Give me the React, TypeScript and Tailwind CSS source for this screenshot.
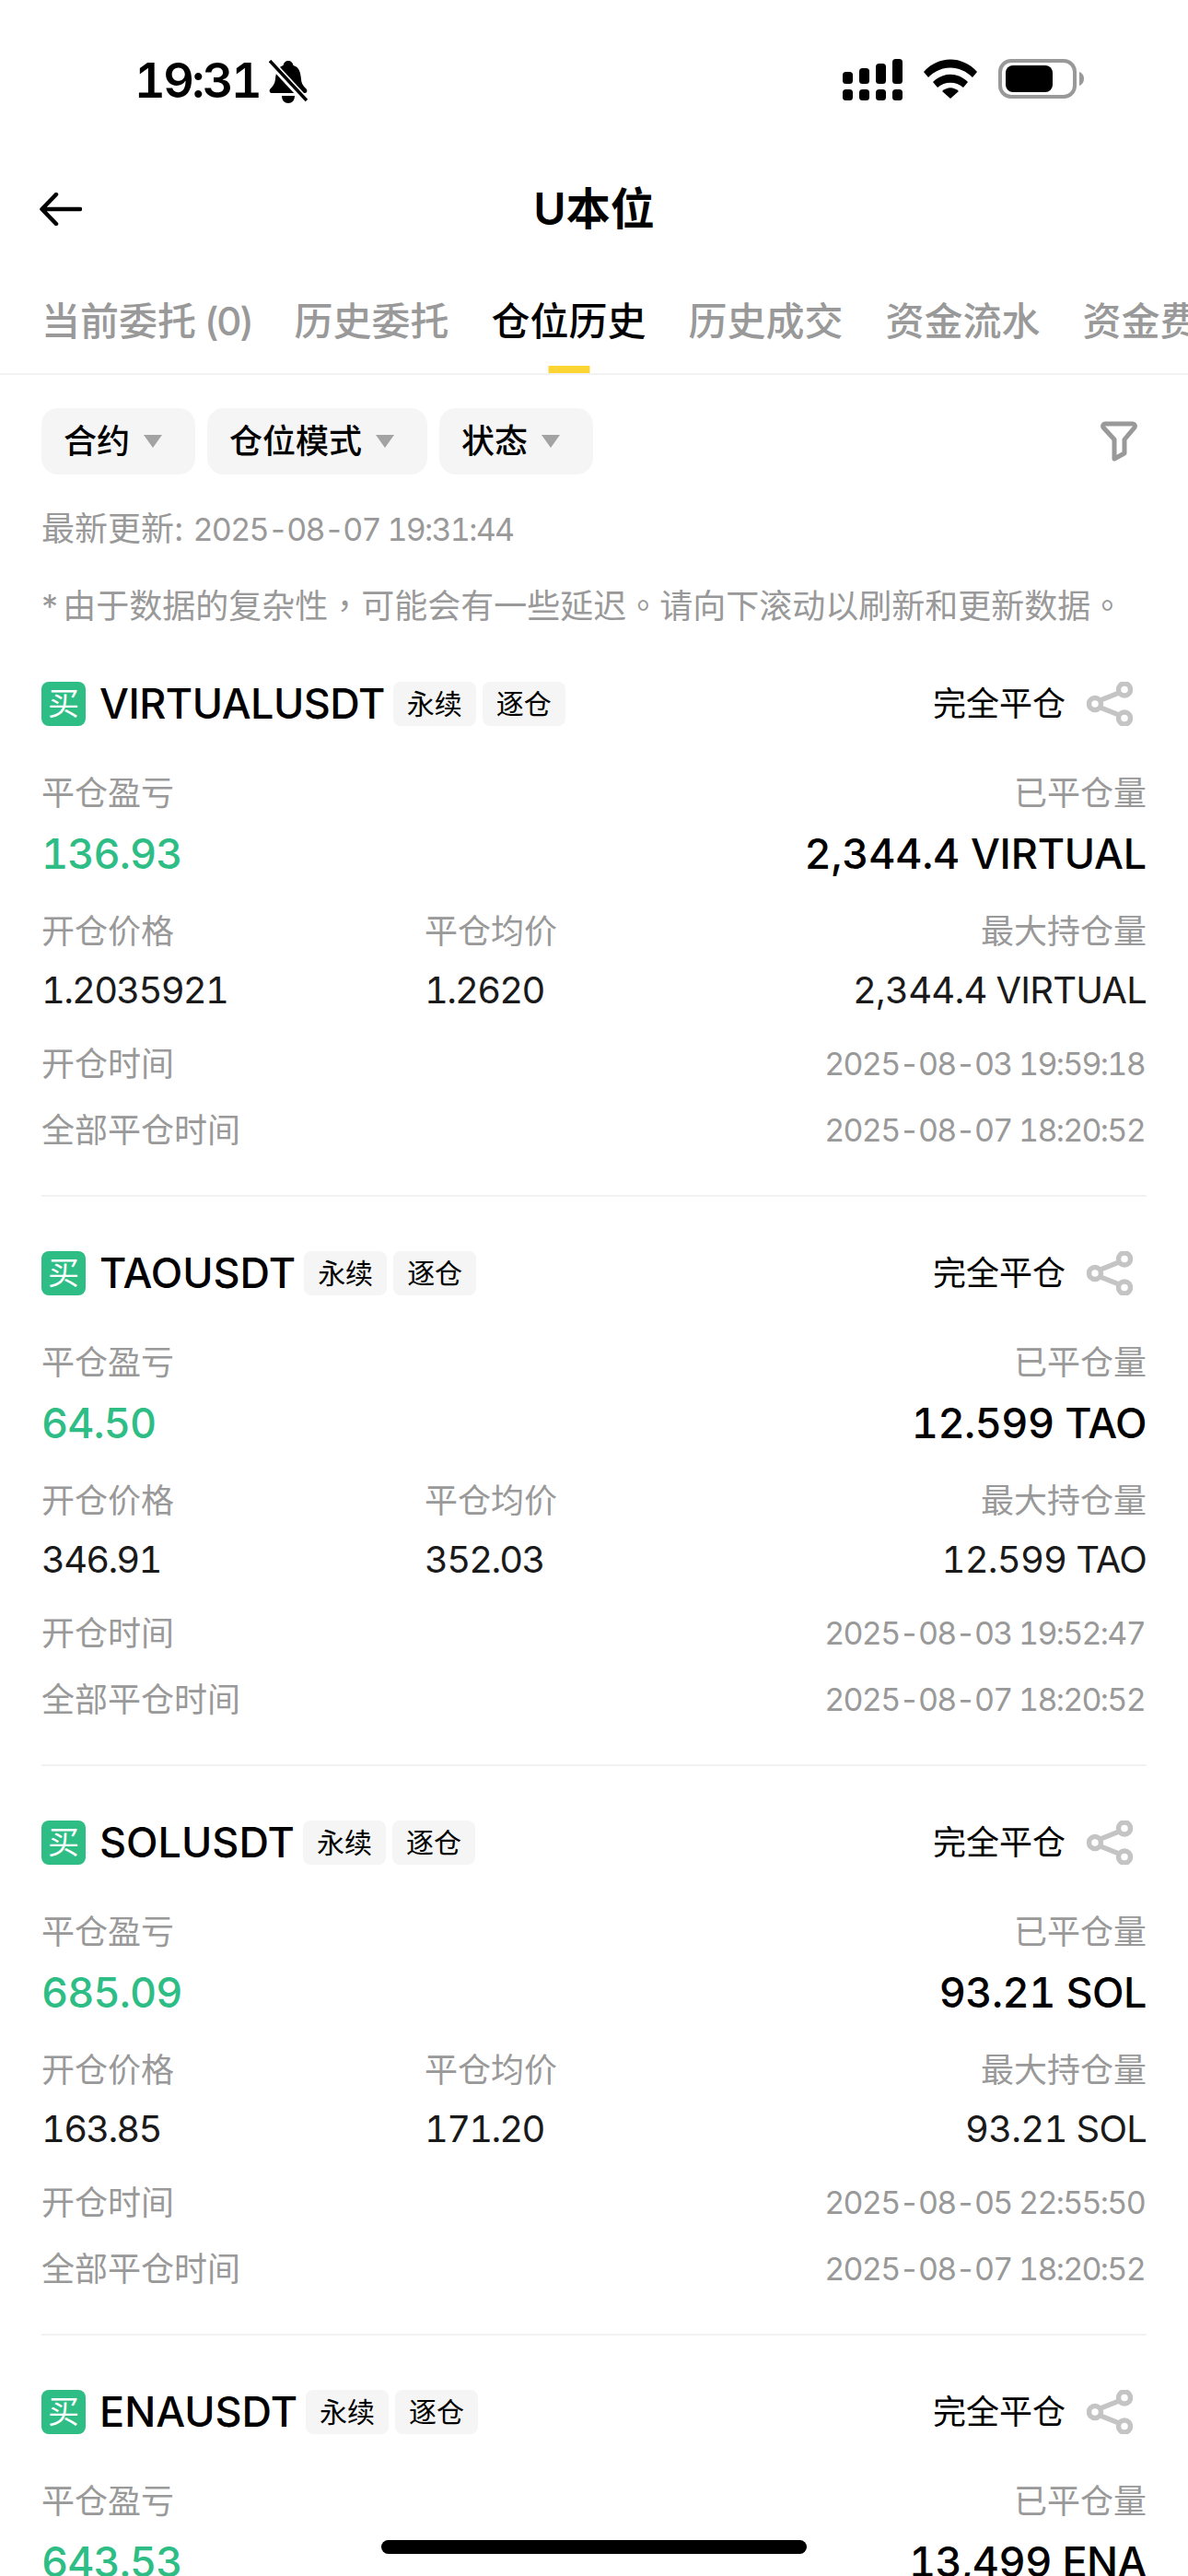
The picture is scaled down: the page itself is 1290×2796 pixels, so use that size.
import React from 'react';

interface Position {
  symbol: string;
  pnl: string;
  closedQty: string;
  openPrice: string;
  closePrice: string;
  maxQty: string;
  openTime: string;
  closeTime: string;
  narrow?: boolean;
}

const positions: Position[] = [
  { symbol: 'VIRTUALUSDT', pnl: '136.93', closedQty: '2,344.4 VIRTUAL', openPrice: '1.2035921', closePrice: '1.2620', maxQty: '2,344.4 VIRTUAL', openTime: '2025-08-03 19:59:18', closeTime: '2025-08-07 18:20:52', narrow: true },
  { symbol: 'TAOUSDT', pnl: '64.50', closedQty: '12.599 TAO', openPrice: '346.91', closePrice: '352.03', maxQty: '12.599 TAO', openTime: '2025-08-03 19:52:47', closeTime: '2025-08-07 18:20:52' },
  { symbol: 'SOLUSDT', pnl: '685.09', closedQty: '93.21 SOL', openPrice: '163.85', closePrice: '171.20', maxQty: '93.21 SOL', openTime: '2025-08-05 22:55:50', closeTime: '2025-08-07 18:20:52' },
  { symbol: 'ENAUSDT', pnl: '643.53', closedQty: '13,499 ENA', openPrice: '0.5871', closePrice: '0.6348', maxQty: '13,499 ENA', openTime: '2025-08-05 22:55:50', closeTime: '2025-08-07 18:20:52' },
];

const tabs = ['当前委托', '历史委托', '仓位历史', '历史成交', '资金流水', '资金费用'];
const filters = ['合约', '仓位模式', '状态'];

const StatusBar = () => (
  <div className="h-[177px] flex items-start justify-between pl-[146px] pr-[113px] pt-[64px]">
    <div className="flex items-center gap-[10px] h-[48px]">
      <span className="text-[52px] leading-[48px] font-semibold text-black tracking-[-2.500px] tabular-nums">19:31</span>
      <svg width="42" height="47" viewBox="0 0 42 47">
        <path d="M21 1c3 0 5 2 5.500 5 7 2 8 9 8.500 15 .3 5 3 8 6 11 1 2 0 4-2 4H3c-2 0-3-2-2-4 3-3 5.500-6 6-11 .5-6 2-13 8.500-15C16 3 18 1 21 1z" fill="#000" />
        <path d="M14 39h14c0 5-3 8-7 8s-7-3-7-8z" fill="#000" />
        <path d="M2 3l38 41" stroke="#fff" strokeWidth="8" />
        <path d="M1 1l40 43" stroke="#000" strokeWidth="3.500" />
      </svg>
    </div>
    <div className="flex items-center">
      <svg width="66" height="46" viewBox="0 0 66 46" fill="#000">
        <rect x="0" y="14" width="11" height="13" rx="3.500" />
        <rect x="18" y="10" width="11" height="17" rx="3.500" />
        <rect x="36" y="5" width="11" height="22" rx="3.500" />
        <rect x="54" y="0" width="11" height="27" rx="3.500" />
        <rect x="0" y="33" width="11" height="12" rx="3.500" />
        <rect x="18" y="33" width="11" height="12" rx="3.500" />
        <rect x="36" y="33" width="11" height="12" rx="3.500" />
        <rect x="54" y="33" width="11" height="12" rx="3.500" />
      </svg>
      <svg width="58" height="43" viewBox="0 0 58 43" className="ml-[22px] -mt-[3px]" fill="#000">
        <path d="M0 14C16-4 42-4 58 14l-5 6C39 6 19 6 5 20z" />
        <path d="M10 25c11-11 27-11 38 0l-5 6c-8-7-20-7-28 0z" />
        <path d="M20 35c6-5 12-5 18 0l-9 8z" />
      </svg>
      <svg width="93" height="43" viewBox="0 0 93 43" className="ml-[23px] -mt-[3px]">
        <rect x="2" y="2" width="81" height="39" rx="12" fill="none" stroke="#999" strokeWidth="4" />
        <rect x="8" y="7" width="51" height="29" rx="8" fill="#000" />
        <path d="M88 14c3 1 5 4 5 7.500s-2 6.500-5 7.500z" fill="#999" />
      </svg>
    </div>
  </div>
);

const NavBar = () => (
  <div className="relative h-[100px] flex items-center justify-center">
    <svg width="46" height="36" viewBox="0 0 46 36" className="absolute left-[43px] top-[32px]" fill="none" stroke="#000" strokeWidth="4.500" strokeLinecap="round" strokeLinejoin="round">
      <path d="M44 18H3M18 2L2.500 18 18 34" />
    </svg>
    <span className="text-[48px] leading-[60px] font-semibold text-black">U本位</span>
  </div>
);

const TabBar = () => (
  <div className="h-[130px] border-b-2 border-[#f2f2f2] flex pl-[45px] gap-[46px] overflow-hidden">
    {tabs.map((tab, i) => (
      <div key={tab} className={`relative shrink-0 pt-[44px] text-[42px] leading-[56px] whitespace-nowrap font-medium ${i === 2 ? 'text-black' : 'text-[#999999]'}`}>
        {tab}
        {i === 0 && <span className="tracking-[-2.200px]"> (0)</span>}
        {i === 2 && <div className="absolute left-1/2 -translate-x-1/2 bottom-0 w-[45px] h-[8px] bg-[#fcd535]" />}
      </div>
    ))}
  </div>
);

const FilterBar = () => (
  <div className="flex items-center justify-between pl-[45px] pr-[55px] mt-[36px]">
    <div className="flex gap-[13px]">
      {filters.map((label) => (
        <div key={label} className="h-[72px] pl-[24px] pr-[36px] rounded-[18px] bg-[#f5f5f5] flex items-center gap-[15px]">
          <span className="text-[36px] leading-[44px] text-black font-medium">{label}</span>
          <div className="w-0 h-0 border-l-[10px] border-r-[10px] border-t-[14px] border-l-transparent border-r-transparent border-t-[#a3a3a3]" />
        </div>
      ))}
    </div>
    <svg width="40" height="44" viewBox="0 0 40 44" fill="none" stroke="#999" strokeWidth="5" strokeLinejoin="round">
      <path d="M5 3h30c2 0 3 2 2 4L26 20v15l-11 6V20L3 7C2 5 3 3 5 3z" />
    </svg>
  </div>
);

const ShareIcon = () => (
  <svg width="50" height="48" viewBox="0 0 50 48" fill="none" stroke="#c4c4c4" strokeWidth="5.500">
    <circle cx="41" cy="8.500" r="6.500" />
    <circle cx="41" cy="39.500" r="6.500" />
    <circle cx="9" cy="24" r="6.500" />
    <path d="M15 20l20-8M15 28l20 8" />
  </svg>
);

const Label = ({ children, right }: { children: React.ReactNode; right?: boolean }) => (
  <div className={`h-[50px] text-[36px] leading-[50px] text-[#999999] ${right ? 'text-right' : ''}`}>{children}</div>
);

const Time = ({ children }: { children: React.ReactNode }) => (
  <div className="h-[50px] mr-[2px] text-[34px] leading-[50px] text-[#999999] tabular-nums tracking-[-1.700px]">{children}</div>
);

const PositionCard = ({ position }: { position: Position }) => (
  <div className="mx-[45px]">
    <div className="h-[48px] flex items-center">
      <div className="w-[48px] h-[48px] rounded-[8px] bg-[#2ebd85] text-white text-[34px] leading-[48px] text-center">买</div>
      <span className={`ml-[15px] text-[45px] leading-[48px] font-medium text-black ${position.narrow ? 'tracking-[-0.5px]' : ''}`}>{position.symbol}</span>
      <div className="ml-[9px] flex gap-[7px]">
        <span className="w-[90px] h-[48px] rounded-[8px] bg-[#f5f5f5] text-[30px] leading-[48px] text-center text-black">永续</span>
        <span className="w-[90px] h-[48px] rounded-[8px] bg-[#f5f5f5] text-[30px] leading-[48px] text-center text-black">逐仓</span>
      </div>
      <span className="ml-auto text-[36px] leading-[48px] text-black">完全平仓</span>
      <div className="ml-[23px] mr-[15px]"><ShareIcon /></div>
    </div>

    <div className="mt-[48px] flex justify-between">
      <Label>平仓盈亏</Label>
      <Label right>已平仓量</Label>
    </div>
    <div className="mt-[13px] h-[56px] flex justify-between items-center text-[45px] leading-[56px] font-medium tabular-nums">
      <span className="text-[#2ebd85] tracking-[-0.9px]">{position.pnl}</span>
      <span className={`text-black ${position.narrow ? 'tracking-[-0.2px]' : 'tracking-[-0.5px]'}`}>{position.closedQty}</span>
    </div>

    <div className="mt-[31px] grid grid-cols-[416px_1fr_auto]">
      <Label>开仓价格</Label>
      <Label>平仓均价</Label>
      <Label right>最大持仓量</Label>
    </div>
    <div className="mt-[14px] h-[50px] grid grid-cols-[416px_1fr_auto] text-[40px] leading-[50px] text-[#1a1a1a] tabular-nums tracking-[-1.800px]">
      <span>{position.openPrice}</span>
      <span>{position.closePrice}</span>
      <span className="tracking-[-0.8px]">{position.maxQty}</span>
    </div>

    <div className="mt-[30px] flex justify-between">
      <Label>开仓时间</Label>
      <Time>{position.openTime}</Time>
    </div>
    <div className="mt-[22px] flex justify-between">
      <Label>全部平仓时间</Label>
      <Time>{position.closeTime}</Time>
    </div>

    <div className="mt-[45px] mb-[59px] h-[2px] bg-[#f2f2f2]" />
  </div>
);

export default function App() {
  return (
    <div className="relative w-[1290px] h-[2796px] overflow-hidden bg-white font-['Inter','Noto_Sans_CJK_SC',sans-serif]">
      <StatusBar />
      <NavBar />
      <TabBar />
      <FilterBar />
      <div className="mt-[34px] mx-[45px] h-[50px] text-[36px] leading-[50px] text-[#999999]">最新更新: <span className="text-[34px] tabular-nums tracking-[-1.700px]">2025-08-07 19:31:44</span></div>
      <div className="mt-[31px] mx-[45px] h-[50px] text-[36px] leading-[50px] text-[#999999] whitespace-nowrap">
        <span className="mr-[-5px]">*</span> 由于数据的复杂性<span className="font-['Noto_Sans_CJK_TC',sans-serif]">，</span>可能会有一些延迟<span className="font-['Noto_Sans_CJK_TC',sans-serif]">。</span>请向下滚动以刷新和更新数据<span className="font-['Noto_Sans_CJK_TC',sans-serif]">。</span>
      </div>
      <div className="mt-[60px]">
        {positions.map((p) => (
          <PositionCard key={p.symbol} position={p} />
        ))}
      </div>
      <div className="absolute left-[414px] top-[2757px] w-[462px] h-[15px] rounded-full bg-black" />
    </div>
  );
}
